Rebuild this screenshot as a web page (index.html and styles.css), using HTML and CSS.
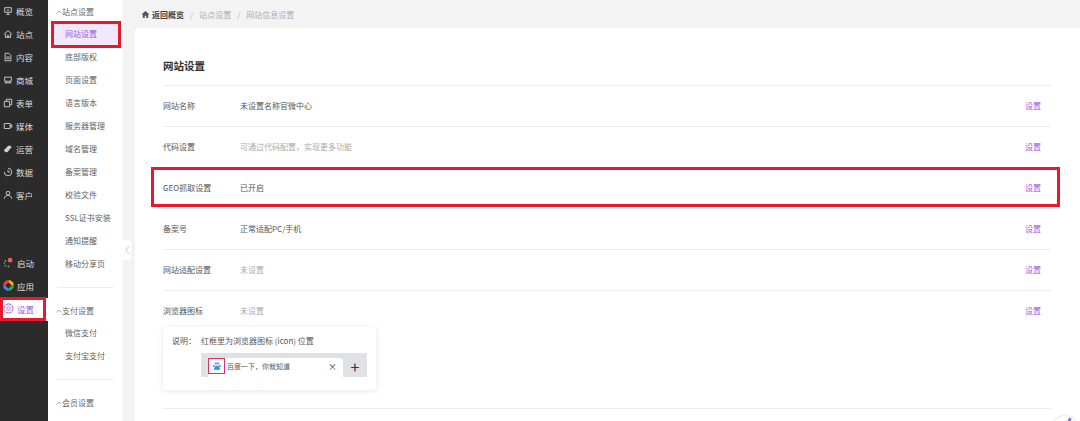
FILE: index.html
```html
<!DOCTYPE html>
<html lang="zh">
<head>
<meta charset="utf-8">
<title>网站设置</title>
<link rel="stylesheet" href="styles.css">
</head>
<body>
<div class="app">
  <nav class="rail">
    <div class="rail-group">
      <a class="rail-item"><svg class="ri" viewBox="0 0 12 12"><path d="M2 2h8v5.500H2zM6 7.500V10M4 10h4M4.500 5h3"/></svg>概览</a>
      <a class="rail-item"><svg class="ri" viewBox="0 0 12 12"><path d="M1.500 6 6 2l4.500 4M2.800 5.500V10h6.400V5.500M5 10V8h2v2"/></svg>站点</a>
      <a class="rail-item"><svg class="ri" viewBox="0 0 12 12"><path d="M2.500 1.500h4.500l2.500 2.500v6.500h-7zM4 6h4M4 8h4"/></svg>内容</a>
      <a class="rail-item"><svg class="ri" viewBox="0 0 12 12"><path d="M2 2.500h8v5H2zM3.500 7.500v2M8.500 7.500v2M2 9.500h8"/></svg>商城</a>
      <a class="rail-item"><svg class="ri" viewBox="0 0 12 12"><path d="M1.500 4h6.500v6.500H1.500zM4 4V1.500h6.500V8H8"/></svg>表单</a>
      <a class="rail-item"><svg class="ri" viewBox="0 0 12 12"><path d="M1.500 3h7v6h-7zM8.500 5.500l2-1.200v3.400l-2-1.200"/></svg>媒体</a>
      <a class="rail-item"><svg class="ri filled" viewBox="0 0 12 12"><path d="M1.500 7 6 2.500c1-1 4.500-.5 4 1.500L5.500 9.500c-1.500 1-5-.5-4-2.500z"/></svg>运营</a>
      <a class="rail-item"><svg class="ri" viewBox="0 0 12 12"><path d="M6 1.500a4.500 4.500 0 1 1-4.500 4.500M6 3.500V6h2.500"/></svg>数据</a>
      <a class="rail-item"><svg class="ri" viewBox="0 0 12 12"><circle cx="6" cy="3.800" r="2.300"/><path d="M1.500 10.500c.5-3 2.500-4 4.500-4s4 1 4.500 4"/></svg>客户</a>
    </div>
    <div class="rail-group rail-bottom">
      <a class="rail-item"><svg class="ri-c" viewBox="0 0 14 14"><circle cx="9" cy="4" r="3" fill="#ef5a5f"/><circle cx="3" cy="5" r="1" fill="#f3b52e"/><circle cx="1.500" cy="8" r="1" fill="#3fa9f5"/><circle cx="3" cy="11" r="1" fill="#4cc38a"/><circle cx="7" cy="12" r="1.300" fill="#39b54a"/></svg>启动</a>
      <a class="rail-item"><svg class="ri-c" viewBox="0 0 14 14" fill="none" stroke-width="3.800"><path d="M7 2a5 5 0 0 1 5 5" stroke="#f4b400"/><path d="M12 7a5 5 0 0 1-5 5" stroke="#34a853"/><path d="M7 12a5 5 0 0 1-5-5" stroke="#4285f4"/><path d="M2 7a5 5 0 0 1 5-5" stroke="#ea4335"/></svg>应用</a>
      <a class="rail-item active"><svg class="ri-g" viewBox="0 0 14 14"><path d="M5.700 1h2.600l.4 1.700 1.500-.8 1.900 1.900-.9 1.500 1.800.5v2.600l-1.800.5.900 1.500-1.900 1.900-1.500-.9-.4 1.600H5.700l-.4-1.600-1.500.9-1.900-1.900.9-1.500L1 8.400V5.800l1.800-.5-.9-1.500 1.900-1.900 1.500.8z"/><circle cx="7" cy="7" r="2.200"/></svg>设置</a>
    </div>
  </nav>

  <aside class="sub">
    <section class="sub-group">
      <h4 class="sub-title"><svg class="chev" viewBox="0 0 6 4"><path d="M.5 3.500 3 1l2.500 2.500"/></svg>站点设置</h4>
      <a class="sub-item current">网站设置</a>
      <a class="sub-item">底部版权</a>
      <a class="sub-item">页面设置</a>
      <a class="sub-item">语言版本</a>
      <a class="sub-item">服务器管理</a>
      <a class="sub-item">域名管理</a>
      <a class="sub-item">备案管理</a>
      <a class="sub-item">校验文件</a>
      <a class="sub-item">SSL证书安装</a>
      <a class="sub-item">通知提醒</a>
      <a class="sub-item">移动分享页</a>
    </section>
    <section class="sub-group">
      <h4 class="sub-title"><svg class="chev" viewBox="0 0 6 4"><path d="M.5 3.500 3 1l2.500 2.500"/></svg>支付设置</h4>
      <a class="sub-item">微信支付</a>
      <a class="sub-item">支付宝支付</a>
    </section>
    <section class="sub-group last">
      <h4 class="sub-title"><svg class="chev" viewBox="0 0 6 4"><path d="M.5 3.500 3 1l2.500 2.500"/></svg>会员设置</h4>
    </section>
  </aside>

  <main class="main">
    <div class="collapse"><svg viewBox="0 0 5 10"><path d="M4 1 1 5l3 4"/></svg></div>
    <div class="crumbs">
      <svg class="home" viewBox="0 0 10 10"><path d="M5 1 .5 5H2v4h2.200V6.500h1.600V9H8V5h1.500z"/></svg>
      <b class="back">返回概览</b><i>/</i><span>站点设置</span><i>/</i><span>网站信息设置</span>
    </div>
    <div class="panel">
      <h2 class="panel-title">网站设置</h2>
      <div class="row"><span class="label">网站名称</span><span class="value">未设置名称官微中心</span><a class="link">设置</a></div>
      <div class="row"><span class="label">代码设置</span><span class="value muted">可通过代码配置，实现更多功能</span><a class="link">设置</a></div>
      <div class="row"><span class="label">GEO抓取设置</span><span class="value">已开启</span><a class="link">设置</a></div>
      <div class="row"><span class="label">备案号</span><span class="value">正常适配PC/手机</span><a class="link">设置</a></div>
      <div class="row"><span class="label">网站适配设置</span><span class="value muted">未设置</span><a class="link">设置</a></div>
      <div class="row open"><span class="label">浏览器图标</span><span class="value muted">未设置</span><a class="link">设置</a></div>
      <div class="tip">
        <div class="tip-line"><span class="tip-key">说明：</span><span>红框里为浏览器图标 (icon) 位置</span></div>
        <div class="tabbar">
          <div class="tab">
            <span class="fav"><svg viewBox="0 0 10 10"><circle cx="2" cy="5" r="1" /><circle cx="3.800" cy="2.500" r="1.100"/><circle cx="6.200" cy="2.500" r="1.100"/><circle cx="8" cy="5" r="1"/><path d="M5 4.500c-1.500 0-3 2-3 3.200C2 9 3.500 9 5 8.800 6.500 9 8 9 8 7.700 8 6.500 6.500 4.500 5 4.500z"/></svg></span>
            <span class="tab-name">百度一下，你就知道</span>
            <span class="tab-x">×</span>
          </div>
          <span class="tab-plus">+</span>
        </div>
      </div>
      <div class="end-line"></div>
    </div>
  </main>
</div>

<div class="mark m-sub"></div>
<div class="mark m-set"></div>
<div class="mark m-geo"></div>
<div class="orb"></div>
</body>
</html>
```
FILE: styles.css
```css
* { box-sizing: border-box; }
html, body { margin: 0; height: 421px; overflow: hidden; }
body {
  position: relative;
  width: 1080px;
  font-family: "Noto Sans CJK SC", "Liberation Sans", sans-serif;
  font-size: 8px;
  color: #555;
  background: #f3f3f3;
}
h2, h4 { margin: 0; }
a { color: inherit; text-decoration: none; }
.app { display: flex; height: 421px; }

/* dark rail */
.rail {
  width: 48px;
  flex: none;
  background: #2b2b2b;
  display: flex;
  flex-direction: column;
}
.rail-bottom { margin-top: 45px; }
.rail-item {
  height: 23px;
  display: flex;
  align-items: center;
  gap: 3px;
  padding: 0 0 2px 3px;
  color: #dcdcdc;
  font-size: 8.500px;
  white-space: nowrap;
}
.rail-item.active { background: #fff; color: #9a5bdc; }
.ri { width: 10px; height: 10px; flex: none; fill: none; stroke: #d0d0d0; stroke-width: 1.100; }
.ri.filled { fill: #d0d0d0; stroke: none; }
.ri-c { width: 11px; height: 11px; flex: none; }
.ri-g { width: 11px; height: 11px; flex: none; fill: none; stroke: #9a5bdc; stroke-width: 1; }

/* sub navigation */
.sub {
  width: 75px;
  flex: none;
  background: #fff;
  padding: 0 9px;
}
.sub-group { border-bottom: 1px solid #eee; padding-bottom: 11px; margin-bottom: 11px; }
.sub-group.last { border: 0; }
.sub-title {
  height: 23px;
  display: flex;
  align-items: center;
  gap: 0;
  font-weight: 400;
  font-size: 8px;
  color: #666;
  margin-left: -1px;
}
.chev { width: 6px; height: 4px; fill: none; stroke: #888; stroke-width: .7; }
.sub-item {
  height: 23px;
  display: flex;
  align-items: center;
  padding: 0 0 2px 12px;
  margin: 0 -5px 0 -4px;
  color: #5f5f5f;
  white-space: nowrap;
}
.sub-item.current { background: #f1e9fb; color: #9a5bdc; }

/* main */
.main { flex: 1; min-width: 0; position: relative; padding-left: 12px; }
.collapse {
  position: absolute;
  left: 0;
  top: 240px;
  width: 8px;
  height: 20px;
  background: #fff;
  border-radius: 0 3px 3px 0;
  display: flex;
  align-items: center;
  justify-content: center;
}
.collapse svg { width: 5px; height: 10px; fill: none; stroke: #bbb; stroke-width: .8; }
.crumbs {
  height: 28px;
  display: flex;
  align-items: center;
  padding-left: 6px;
  color: #a9b1bd;
  white-space: nowrap;
}
.crumbs i { font-style: normal; margin: 0 6px; color: #b5b5b5; }
.home { width: 9px; height: 9px; fill: #555; margin-right: 2px; }
.back { font-weight: 700; color: #444; }

.panel {
  background: #fff;
  height: 393px;
  border-radius: 3px 0 0 0;
  padding: 0 29px 0 28px;
}
.panel-title {
  height: 58px;
  border-bottom: 1px solid #eee;
  display: flex;
  align-items: center;
  padding-top: 17px;
  font-size: 10.500px;
  font-weight: 700;
  color: #333;
}
.row {
  height: 41px;
  display: flex;
  align-items: center;
  padding-bottom: 2px;
  border-bottom: 1px solid #eee;
}
.row.open { border-bottom: 0; padding-bottom: 2px; }
.label { width: 77px; flex: none; color: #555; }
.value { flex: 1; color: #555; }
.muted { color: #aaa; }
.link { color: #9a5bdc; margin-right: 10px; }

.tip {
  width: 213px;
  height: 63px;
  margin-top: -5px;
  background: #fff;
  border-radius: 3px;
  box-shadow: 0 1px 6px rgba(0,0,0,.1);
  padding: 6px 9px;
}
.tip-line { display: flex; color: #555; line-height: 15px; }
.tip-key { width: 29px; flex: none; }
.tabbar {
  margin: 5px 0 0 29px;
  width: 166px;
  height: 24px;
  background: #dfe1e5;
  padding: 5px 0 0 7px;
  display: flex;
}
.tab {
  width: 135px;
  height: 19px;
  background: #fff;
  border-radius: 4px 4px 0 0;
  display: flex;
  align-items: flex-start;
  font-size: 7px;
}
.fav {
  width: 17px;
  height: 16px;
  border: 1px solid #e0306a;
  display: flex;
  align-items: center;
  justify-content: center;
  flex: none;
}
.fav svg { width: 10px; height: 10px; fill: #3f8cf0; }
.tab-name { flex: 1; margin-left: 2px; color: #555; line-height: 16px; }
.tab-x { font-size: 9px; line-height: 17px; color: #333; margin-right: 6px; }
.tab-plus { flex: 1; text-align: center; font-size: 16px; line-height: 17px; color: #333; }
.end-line { margin-top: 18px; border-top: 1px solid #eee; }

/* callouts */
.mark { position: absolute; border: 3px solid #e8192c; }
.m-sub { left: 51px; top: 21px; width: 70px; height: 27px; }
.m-set { left: 0; top: 297px; width: 46px; height: 24px; }
.m-geo { left: 151px; top: 167px; width: 909px; height: 40px; }
.orb {
  position: absolute;
  left: 1052px;
  top: 416px;
  width: 26px;
  height: 26px;
  border-radius: 50%;
  background: #fff;
  box-shadow: 0 0 3px rgba(0,0,0,.2);
}
.orb::after {
  content: "";
  position: absolute;
  left: 16px;
  top: 2px;
  width: 3px;
  height: 4px;
  background: #8a6fe8;
  transform: rotate(25deg);
}
```
